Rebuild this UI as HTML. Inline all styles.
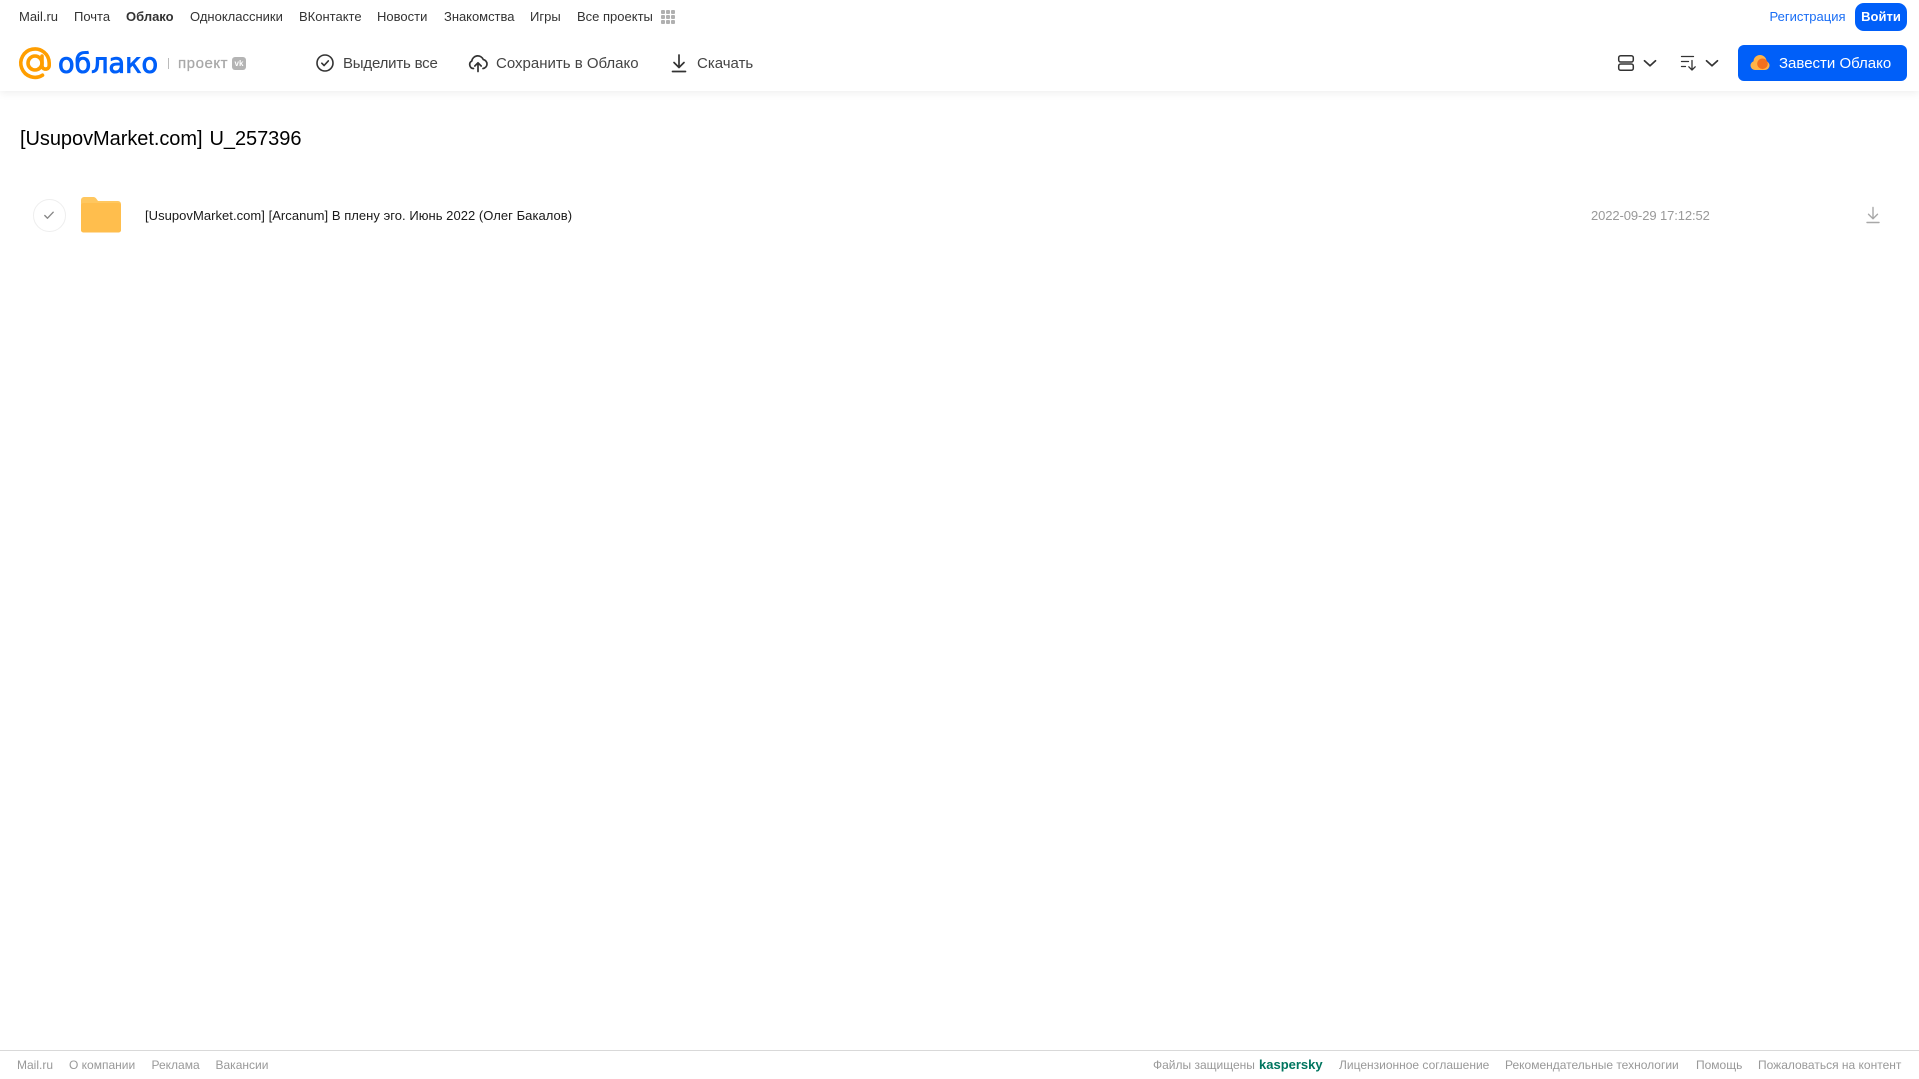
<!DOCTYPE html>
<html lang="ru">
<head>
<meta charset="utf-8">
<title>[UsupovMarket.com] U_257396</title>
<style>
html,body{margin:0;padding:0;background:#fff;width:1919px;height:1079px;overflow:hidden}
body{position:relative;font-family:"Liberation Sans",Arial,sans-serif}
a,span.t{position:absolute;white-space:nowrap;text-decoration:none}
.n{top:9px;font-size:13px;line-height:15px;color:#333}
.h{top:54.500px;font-size:15px;line-height:18px;color:#444}
.f{top:1058px;font-size:12px;line-height:14px;color:#999}
#hdr{position:absolute;left:0;top:0;width:1919px;height:91px;background:#fff;box-shadow:0 2px 8px rgba(0,0,0,.07)}
svg{position:absolute;display:block}
.btn{position:absolute;background:#005ff9;color:#fff}
</style>
</head>
<body>
<div id="hdr"></div>

<a class="n" style="left:19px">Mail.ru</a>
<a class="n" style="left:74px">Почта</a>
<a class="n" style="left:126px;font-weight:bold">Облако</a>
<a class="n" style="left:190px">Одноклассники</a>
<a class="n" style="left:299px">ВКонтакте</a>
<a class="n" style="left:377px">Новости</a>
<a class="n" style="left:444px;letter-spacing:-.03px">Знакомства</a>
<a class="n" style="left:530px">Игры</a>
<a class="n" style="left:577px">Все проекты</a>
<svg style="left:661px;top:10px" width="15" height="15" fill="#b0b0b0"><rect x="0" y="0" width="4" height="4" rx="1"/><rect x="5" y="0" width="4" height="4" rx="1"/><rect x="10" y="0" width="4" height="4" rx="1"/><rect x="0" y="5" width="4" height="4" rx="1"/><rect x="5" y="5" width="4" height="4" rx="1"/><rect x="10" y="5" width="4" height="4" rx="1"/><rect x="0" y="10" width="4" height="4" rx="1"/><rect x="5" y="10" width="4" height="4" rx="1"/><rect x="10" y="10" width="4" height="4" rx="1"/></svg>

<a class="n" style="left:1769.500px;color:#1a6ef5">Регистрация</a>
<a class="btn" style="left:1855px;top:3px;width:52px;height:28px;border-radius:9px;font-size:13px;font-weight:bold;line-height:28px;text-align:center">Войти</a>

<!-- logo -->
<svg style="left:17px;top:45px" width="38" height="36" viewBox="0 0 38 36" fill="none"><circle cx="18" cy="18" r="7" stroke="#ff9e00" stroke-width="3.600"/><path d="M25 11V20.500a3.600 3.600 0 0 0 7.200 0V18A14.200 14.200 0 1 0 25.500 30.200" stroke="#ff9e00" stroke-width="3.600" stroke-linecap="round"/></svg>
<svg style="left:56px;top:44px" width="106" height="36"><text x="2" y="28.500" font-family="'DejaVu Sans',sans-serif" font-size="28" fill="#005ff9" stroke="#005ff9" stroke-width=".9" textLength="100" lengthAdjust="spacingAndGlyphs">облако</text></svg>
<div style="position:absolute;left:168px;top:58px;width:1px;height:11px;background:#bbb"></div>
<a class="h" style="left:178px;color:#a8a8a8;font-size:15px;letter-spacing:.55px;-webkit-text-stroke:.25px #a8a8a8">проект</a>
<div style="position:absolute;left:232px;top:57px;width:14px;height:13px;border-radius:3px;background:#b4b4b4;color:#fff;font-size:8px;font-weight:bold;line-height:13px;text-align:center">vk</div>

<!-- toolbar -->
<svg style="left:315px;top:53px" width="20" height="20" fill="none" stroke="#333" stroke-width="1.600" stroke-linecap="round" stroke-linejoin="round"><circle cx="10" cy="10" r="8"/><path d="M6.800 10.200l2.300 2.300 4.200-4.600"/></svg>
<a class="h" style="left:343px;letter-spacing:-.2px">Выделить все</a>
<svg style="left:468px;top:53px" width="20" height="20" fill="none" stroke="#333" stroke-width="1.700" stroke-linecap="round" stroke-linejoin="round"><path d="M5.500 15.500A4 4 0 0 1 3.800 8 6 6 0 0 1 15.300 6.600 4.500 4.500 0 0 1 15 15.500"/><path d="M10 18.500V10M6.800 13l3.200-3.200 3.200 3.200"/></svg>
<a class="h" style="left:496px">Сохранить в Облако</a>
<svg style="left:670px;top:53px" width="18" height="20" fill="none" stroke="#333" stroke-width="1.700" stroke-linecap="round" stroke-linejoin="round"><path d="M9 2v12M4 9.500L9 14.500l5-5M2.500 18.500h13"/></svg>
<a class="h" style="left:697px">Скачать</a>

<svg style="left:1617px;top:54px" width="18" height="18" fill="none" stroke="#333" stroke-width="1.500"><rect x="1.700" y="1.700" width="14.600" height="6.300" rx="2"/><rect x="1.700" y="10" width="14.600" height="6.300" rx="2"/></svg>
<svg style="left:1643px;top:59px" width="14" height="9" fill="none" stroke="#333" stroke-width="1.700" stroke-linecap="round" stroke-linejoin="round"><path d="M1.500 1.800L7 6.800l5.500-5"/></svg>
<svg style="left:1680px;top:54px" width="18" height="18" fill="none" stroke="#333" stroke-width="1.300" stroke-linecap="round" stroke-linejoin="round"><path d="M1.500 2.500h12M1.500 7.500h7M1.500 12.500h4M12 6.500v9.500M8.800 12.800L12 16l3.200-3.200"/></svg>
<svg style="left:1705px;top:59px" width="14" height="9" fill="none" stroke="#333" stroke-width="1.700" stroke-linecap="round" stroke-linejoin="round"><path d="M1.500 1.800L7 6.800l5.500-5"/></svg>

<div class="btn" style="left:1738px;top:45px;width:169px;height:36px;border-radius:6px"></div>
<svg style="left:1750px;top:54px" width="20" height="18"><g fill="#ffb347"><circle cx="5" cy="11.500" r="4.500"/><circle cx="10" cy="7.500" r="6.500"/><circle cx="15" cy="11.500" r="4.500"/><rect x="5" y="11" width="10" height="5"/></g><circle cx="12.500" cy="9.800" r="5.300" fill="#f2701f"/></svg>
<a class="h" style="left:1779px;color:#fff">Завести Облако</a>

<!-- title -->
<span class="t" style="left:20px;top:126.500px;font-size:20px;line-height:24px;color:#000;word-spacing:1.500px;letter-spacing:-.05px">[UsupovMarket.com] U_257396</span>

<!-- row -->
<div style="position:absolute;left:33px;top:199px;width:31px;height:31px;border:1px solid #eee;border-radius:50%"></div>
<svg style="left:42px;top:208px" width="14" height="14" fill="none" stroke="#888" stroke-width="1.400" stroke-linecap="round" stroke-linejoin="round"><path d="M2.800 7.500l2.700 2.700 5.700-6"/></svg>
<svg style="left:81px;top:197px" width="40" height="36"><path d="M0 3a3 3 0 0 1 3-3h9.500a3 3 0 0 1 2.500 1.300L17 4h20a3 3 0 0 1 3 3v26a2.500 2.500 0 0 1-2.500 2.500h-35A2.500 2.500 0 0 1 0 33z" fill="#ffc75f"/><path d="M0 8.500a2.500 2.500 0 0 1 2.500-2.500h35a2.500 2.500 0 0 1 2.500 2.500V33a2.500 2.500 0 0 1-2.500 2.500h-35A2.500 2.500 0 0 1 0 33z" fill="#ffbe4d"/></svg>
<span class="t" style="left:145px;top:208px;font-size:13px;line-height:15px;color:#1a1a1a;letter-spacing:.04px">[UsupovMarket.com] [Arcanum] В плену эго. Июнь 2022 (Олег Бакалов)</span>
<span class="t" style="left:1591px;top:208px;font-size:13px;line-height:15px;color:#999;letter-spacing:-.1px">2022-09-29 17:12:52</span>
<svg style="left:1866px;top:206px" width="14" height="18" fill="none" stroke="#a8a8a8" stroke-width="1.400" stroke-linecap="round" stroke-linejoin="round"><path d="M7 1.500v11M2.500 8.300L7 12.800l4.500-4.500M1 16.500h12"/></svg>

<!-- footer -->
<div style="position:absolute;left:0;top:1050px;width:1919px;height:1px;background:#d9d9d9"></div>
<a class="f" style="left:17px">Mail.ru</a>
<a class="f" style="left:69px">О компании</a>
<a class="f" style="left:151.500px">Реклама</a>
<a class="f" style="left:215.500px">Вакансии</a>
<a class="f" style="left:1153px">Файлы защищены</a>
<a class="f" style="left:1259px;color:#00755f;font-weight:bold;font-size:13px">kaspersky</a>
<a class="f" style="left:1339px">Лицензионное соглашение</a>
<a class="f" style="left:1505px">Рекомендательные технологии</a>
<a class="f" style="left:1696px">Помощь</a>
<a class="f" style="left:1758px">Пожаловаться на контент</a>
</body>
</html>
